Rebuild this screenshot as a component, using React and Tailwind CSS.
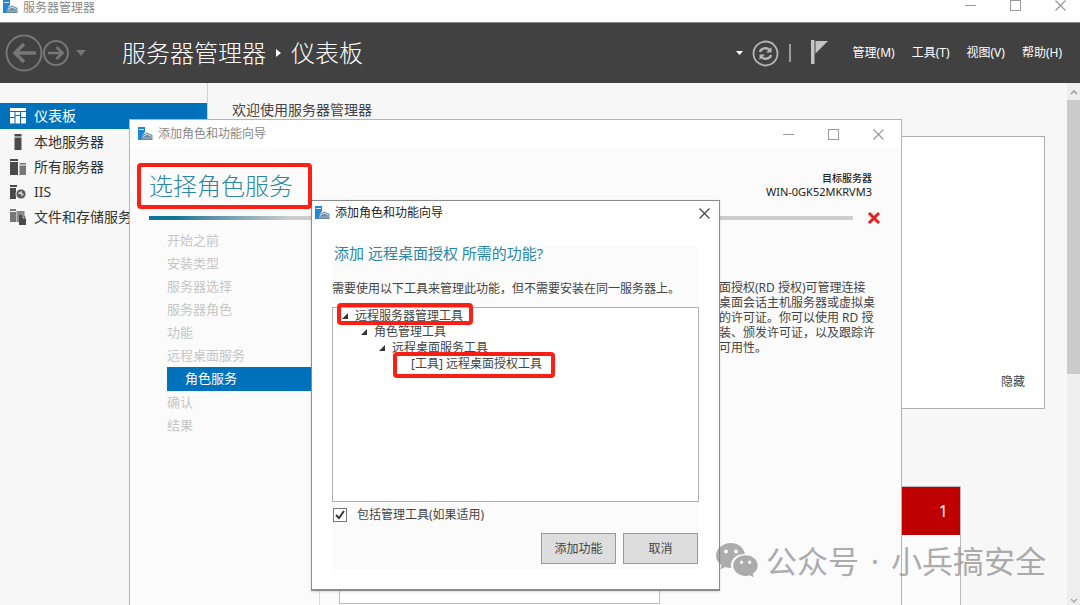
import { useState } from 'react'

const navItems = [
  { label: '仪表板', icon: 'dashboard' },
  { label: '本地服务器', icon: 'local' },
  { label: '所有服务器', icon: 'all' },
  { label: 'IIS', icon: 'iis' },
  { label: '文件和存储服务', icon: 'files' },
]

const menus = ['管理(M)', '工具(T)', '视图(V)', '帮助(H)']

const steps = ['开始之前', '安装类型', '服务器选择', '服务器角色', '功能', '远程桌面服务', '角色服务', '确认', '结果']

const description = [
  '面授权(RD 授权)可管理连接',
  '桌面会话主机服务器或虚拟桌',
  '的许可证。你可以使用 RD 授',
  '装、颁发许可证，以及跟踪许',
  '可用性。',
]

function ServerIcon() {
  return (
    <svg width="15" height="14" viewBox="0 0 15 14" className="shrink-0">
      <path d="M0 0h7v5L4 9v4H0z" fill="#1e88d8" />
      <path d="M1 2.5h5" stroke="#fff" strokeWidth="0.8" />
      <path d="M3.5 8.5 9 5.5l5.500 2.500v5h-11z" fill="#6b8ba4" />
      <path d="M5 9.500 9 7l4.500 2.300" stroke="#dce8f0" strokeWidth="1" fill="none" />
      <path d="M4 11h10" stroke="#a9c0d0" strokeWidth="0.8" />
    </svg>
  )
}

function NavIcon({ name }) {
  return (
    <svg width="16" height="16" viewBox="0 0 16 16" className="shrink-0" fill="#4a4a4a">
      {name === 'dashboard' && (
        <g fill="#fff">
          <path d="M0 0h16v3H0zM0 4h4.500v5H0zM0 10h4.500v5.500H0zM5.500 4h4.500v3H5.500zM5.500 8h4.500v7.500H5.500zM11 4h5v5h-5zM11 10h5v5.500h-5z" />
        </g>
      )}
      {name === 'local' && <path d="M4.500 0h7v2.500h-7zM4.500 3.500h7V16h-7z" />}
      {name === 'all' && (
        <>
          <path d="M0 0h8v2H0zM0 3h8v13H0z" />
          <path d="M9.500 4H16v1.500H9.500zM9.500 6.500H16V16H9.500z" fill="#777" />
        </>
      )}
      {name === 'iis' && (
        <>
          <path d="M0 1h7v2H0zM0 4h6v11H0z" />
          <circle cx="11" cy="10" r="5" fill="#5a5a5a" stroke="#f7f7f7" strokeWidth="0.8" />
          <path d="M8.500 8.500 12 7v2l2 1-2.500 3v-2.500l-3-.5z" fill="#d0d0d0" />
        </>
      )}
      {name === 'files' && (
        <>
          <path d="M0 0h6v2H0zM0 3h6v10H0z" fill="#777" />
          <path d="M6.500 2H12l2.500 0v5h-3v6h-5z" fill="#888" />
          <path d="M9 6h4.500L16 8.500V16H9z" />
          <path d="M13 6v3h3" stroke="#ddd" strokeWidth="0.8" fill="none" />
        </>
      )}
    </svg>
  )
}

function CloseGlyph() {
  return (
    <svg width="11" height="11" viewBox="0 0 11 11" stroke="currentColor" strokeWidth="1.200">
      <path d="M.5.5l10 10M10.500.5l-10 10" />
    </svg>
  )
}

function WindowControls() {
  return (
    <div className="flex items-center gap-[34px] text-[#999]">
      <button type="button" aria-label="最小化">
        <svg width="11" height="11" viewBox="0 0 11 11" stroke="currentColor">
          <path d="M0 5.500h11" />
        </svg>
      </button>
      <button type="button" aria-label="最大化">
        <svg width="11" height="11" viewBox="0 0 11 11" stroke="currentColor" fill="none">
          <rect x=".5" y=".5" width="10" height="10" />
        </svg>
      </button>
      <button type="button" aria-label="关闭">
        <CloseGlyph />
      </button>
    </div>
  )
}

function Header() {
  return (
    <header className="flex h-[61px] shrink-0 items-center border-t border-[#8a8a8a] bg-[#414141] pr-[18px] pl-[5px] text-white">
      <div className="flex items-center text-[#777]">
        <button type="button" aria-label="后退">
          <svg width="38" height="38" viewBox="0 0 38 38" fill="none" stroke="currentColor">
            <circle cx="19" cy="19" r="17.500" strokeWidth="2" />
            <path d="M31 19H10M19 10l-9 9 9 9" strokeWidth="3.500" />
          </svg>
        </button>
        <button type="button" aria-label="前进" className="-ml-px">
          <svg width="28" height="28" viewBox="0 0 28 28" fill="none" stroke="currentColor">
            <circle cx="14" cy="14" r="12" strokeWidth="2" />
            <path d="M6 14h14M14.500 8l6 6-6 6" strokeWidth="2.500" />
          </svg>
        </button>
        <button type="button" aria-label="历史记录" className="ml-[6px]">
          <svg width="10" height="6" viewBox="0 0 10 6" fill="currentColor">
            <path d="M0 0h10L5 6z" />
          </svg>
        </button>
      </div>
      <h1 className="ml-9 flex items-center text-[24px] leading-8 font-light">
        服务器管理器
        <svg width="5" height="8" viewBox="0 0 5 8" fill="#fff" className="mx-[10px]">
          <path d="M0 0l5 4-5 4z" />
        </svg>
        仪表板
      </h1>
      <div className="ml-auto flex items-center">
        <svg width="7" height="4" viewBox="0 0 7 4" fill="#fff" className="mr-[9px]">
          <path d="M0 0h7L3.500 4z" />
        </svg>
        <button type="button" aria-label="刷新">
          <svg width="27" height="27" viewBox="0 0 27 27" fill="none" stroke="#b5b5b5">
            <circle cx="13.500" cy="13.500" r="12" strokeWidth="1.800" />
            <path d="M8 12c1-4 7-5 9.500-2M19 15c-1 4-7 5-9.500 2" strokeWidth="2.400" />
            <path d="M19.500 7v5.500H14zM7.500 20v-5.500H13z" fill="#b5b5b5" stroke="none" />
          </svg>
        </button>
        <span className="ml-[10px] h-[18px] w-[2px] bg-[#9a9a9a]" />
        <button type="button" aria-label="通知" className="ml-5">
          <svg width="18" height="26" viewBox="0 0 18 26" fill="#c4c4c4">
            <path d="M0 0h3.500v24H0z" />
            <path d="M4.500 1H17L4.500 13.500z" />
          </svg>
        </button>
        <nav className="ml-6 flex gap-[17px] text-xs leading-4">
          {menus.map((m) => (
            <button type="button" key={m}>{m}</button>
          ))}
        </nav>
      </div>
    </header>
  )
}

function Sidebar() {
  return (
    <nav className="w-[208px] shrink-0 border-r border-[#cfcfcf] pt-5">
      <ul>
        {navItems.map((item, i) => (
          <li key={item.label}>
            <a
              href="#"
              className={`flex items-center gap-2 pl-[10px] text-sm ${
                i === 0 ? 'h-[26px] bg-[#0072bc] text-white' : 'h-[25px] text-[#333]'
              }`}
            >
              <NavIcon name={item.icon} />
              {item.label}
            </a>
          </li>
        ))}
      </ul>
    </nav>
  )
}

function Dashboard() {
  return (
    <main className="min-w-0 flex-1 pt-[17px] pl-6">
      <h2 className="text-sm leading-5 text-[#444]">欢迎使用服务器管理器</h2>
      <section className="mt-4 mr-[22px] flex h-[273px] items-end justify-end border border-[#adadad] bg-white pr-[19px] pb-[18px]">
        <button type="button" className="text-xs leading-4 text-[#444]">隐藏</button>
      </section>
      <section className="mt-[77px] mr-[106px] flex justify-end">
        <div className="h-40 w-[150px] border border-[#bdbdbd] bg-[#fcfcfc]">
          <p className="bg-[#bf0000] pr-3 text-right text-base leading-[48px] text-white">1</p>
        </div>
      </section>
    </main>
  )
}

function Scrollbar() {
  return (
    <div className="flex w-[13px] shrink-0 flex-col items-center bg-[#eeeeee]">
      <svg width="8" height="17" viewBox="0 0 8 17" fill="none" stroke="#999" strokeWidth="1.500">
        <path d="M1 11l3-3 3 3" />
      </svg>
      <div className="h-[274px] w-full bg-[#cbcbcb]" />
      <svg width="8" height="8" viewBox="0 0 8 8" fill="none" stroke="#aaa" strokeWidth="1.500" className="mt-auto">
        <path d="M1 2l3 3 3-3" />
      </svg>
    </div>
  )
}

function Wizard() {
  return (
    <section className="absolute top-[119px] left-[129px] flex h-[520px] w-[773px] flex-col border border-[#b4b4b4] bg-[#fbfbfb]">
      <div className="flex h-7 shrink-0 items-center bg-white pr-[17px] pl-2 text-xs text-[#888]">
        <ServerIcon />
        <span className="ml-[5px] flex-1">添加角色和功能向导</span>
        <WindowControls />
      </div>
      <div className="flex items-start justify-between pt-[22px] pr-[29px] pl-[19px]">
        <h2 className="text-[24px] leading-8 font-light text-[#2b87a5]">选择角色服务</h2>
        <div className="pt-[2px] text-right text-[11px] leading-[13px] text-[#222]">
          <p className="text-[10px] font-medium">目标服务器</p>
          <p>WIN-0GK52MKRVM3</p>
        </div>
      </div>
      <div className="mt-[9px] flex items-center gap-[14px] pr-5 pl-[19px]">
        <div className="h-1 flex-1 bg-linear-to-r from-[#0f7795] from-4% via-[#cdcdcd] via-20% to-[#cdcdcd]" />
        <svg width="14" height="14" viewBox="0 0 14 14" stroke="#ee1c1c" strokeWidth="3">
          <path d="M2 2l10 10M12 2L2 12" />
        </svg>
      </div>
      <div className="flex min-h-0 flex-1">
        <ol className="w-[190px] shrink-0 border-r border-[#dcdcdc] pt-1 pl-[37px] text-[13px]">
          {steps.map((step) => (
            <li
              key={step}
              className={`flex items-center ${
                step === '角色服务' ? 'h-6 bg-[#0072bc] pl-[18px] text-white' : 'h-[23px] text-[#c6c6c6]'
              }`}
            >
              {step}
            </li>
          ))}
        </ol>
        <div className="flex min-w-0 flex-1 items-start pl-[19px]">
          <div className="h-[379px] w-[321px] border border-[#c0c0c0] bg-white" />
          <p className="mt-[55px] ml-[59px] text-xs leading-[15px] whitespace-nowrap text-[#444]">
            {description.map((line) => (
              <span key={line} className="block">{line}</span>
            ))}
          </p>
        </div>
      </div>
    </section>
  )
}

function TreeRow({ indent, leaf, children }) {
  return (
    <li className={`flex h-4 items-center gap-[7px] ${indent}`}>
      <svg width="6" height="6" viewBox="0 0 6 6" fill={leaf ? 'none' : '#333'}>
        <path d="M6 0v6H0z" />
      </svg>
      {children}
    </li>
  )
}

function FeatureDialog() {
  const [include, setInclude] = useState(true)

  return (
    <section
      role="dialog"
      aria-labelledby="feature-title"
      className="absolute top-[200px] left-[311px] w-[409px] border border-b-2 border-[#8c8c8c] bg-white pb-[19px] text-xs text-[#444] shadow-sm"
    >
      <div className="flex h-6 items-center pr-[9px] pl-[3px] text-[#222]">
        <ServerIcon />
        <span id="feature-title" className="ml-[5px] flex-1">添加角色和功能向导</span>
        <button type="button" aria-label="关闭" className="text-[#444]"><CloseGlyph /></button>
      </div>
      <div className="mx-5 mt-5 bg-[#fbfbfb] pb-[6px]">
        <h3 className="pl-[2px] text-[15px] leading-4 text-[#2b87a5]">添加 远程桌面授权 所需的功能?</h3>
        <p className="mt-5 leading-4 whitespace-nowrap">需要使用以下工具来管理此功能，但不需要安装在同一服务器上。</p>
        <ul className="mt-[10px] h-[195px] border border-[#b0b0b0] bg-white">
          <TreeRow indent="pl-[9px]">远程服务器管理工具</TreeRow>
          <TreeRow indent="pl-7">角色管理工具</TreeRow>
          <TreeRow indent="pl-[46px]">远程桌面服务工具</TreeRow>
          <TreeRow indent="pl-[65px]" leaf>[工具] 远程桌面授权工具</TreeRow>
        </ul>
        <label className="mt-[5px] flex items-center leading-4">
          <input
            type="checkbox"
            checked={include}
            onChange={(e) => setInclude(e.target.checked)}
            className="sr-only"
          />
          <svg width="14" height="14" viewBox="0 0 14 14" fill="#fff" className="mr-[10px] ml-px">
            <rect x=".5" y=".5" width="13" height="13" stroke="#777" />
            {include && <path d="M3 7l3 3 5-7" fill="none" stroke="#333" strokeWidth="2" />}
          </svg>
          包括管理工具(如果适用)
        </label>
        <div className="mt-[10px] flex justify-end gap-[7px] pr-px">
          <button type="button" className="h-[31px] w-[75px] border border-[#999] bg-[#dddddd]">添加功能</button>
          <button type="button" className="h-[31px] w-[75px] border border-[#999] bg-[#dddddd]">取消</button>
        </div>
      </div>
    </section>
  )
}

function Watermark() {
  return (
    <div className="absolute top-[539px] left-[716px] flex items-center text-[31px] leading-[44px] whitespace-nowrap text-[#828282] opacity-65">
      <svg width="42" height="36" viewBox="0 0 42 36" fill="currentColor" className="mr-2">
        <path
          fillRule="evenodd"
          d="M15 0C6.700 0 0 5.600 0 12.500c0 4 2.200 7.400 5.600 9.700L4.200 26.500l5-2.600c1.800.5 3.800.9 6 .9-1.700-8 5-14.300 13.800-13.900C27.600 4.700 22 0 15 0zM10 6.500a2 2 0 1 1 0 4 2 2 0 0 1 0-4zm10 0a2 2 0 1 1 0 4 2 2 0 0 1 0-4z"
        />
        <path
          fillRule="evenodd"
          d="M29.500 12.200c-6.900 0-12.300 4.700-12.300 10.400S22.600 33 29.500 33c1.500 0 3-.3 4.300-.7l4 2.200-1.100-3.700c3.100-1.900 5-4.900 5-8.200 0-5.700-5.300-10.400-12.200-10.400zm-4 5.400a1.700 1.700 0 1 1 0 3.400 1.700 1.700 0 0 1 0-3.400zm8.200 0a1.700 1.700 0 1 1 0 3.400 1.700 1.700 0 0 1 0-3.400z"
        />
      </svg>
      <span>公众号</span>
      <span className="w-8 text-center">·</span>
      <span>小兵搞安全</span>
    </div>
  )
}

export default function App() {
  return (
    <div className="relative flex h-screen flex-col overflow-hidden bg-[#f7f7f7] font-['Noto_Sans','Noto_Sans_CJK_SC',sans-serif]">
      <div className="flex h-[22px] shrink-0 items-start bg-white pr-[14px] pl-[3px] text-xs leading-4 text-[#888]">
        <ServerIcon />
        <span className="ml-[5px] flex-1">服务器管理器</span>
        <WindowControls />
      </div>
      <Header />
      <div className="flex min-h-0 flex-1">
        <Sidebar />
        <Dashboard />
        <Scrollbar />
      </div>

      <Wizard />
      <FeatureDialog />

      {/* highlight frames */}
      <div className="absolute top-[163px] left-[137px] h-[46px] w-[175px] rounded border-4 border-[#fb2016]" />
      <div className="absolute top-[303px] left-[337px] h-[22px] w-[136px] rounded border-4 border-[#fb2016]" />
      <div className="absolute top-[352px] left-[393px] h-[26px] w-[162px] rounded border-4 border-[#fb2016]" />

      <Watermark />
    </div>
  )
}
